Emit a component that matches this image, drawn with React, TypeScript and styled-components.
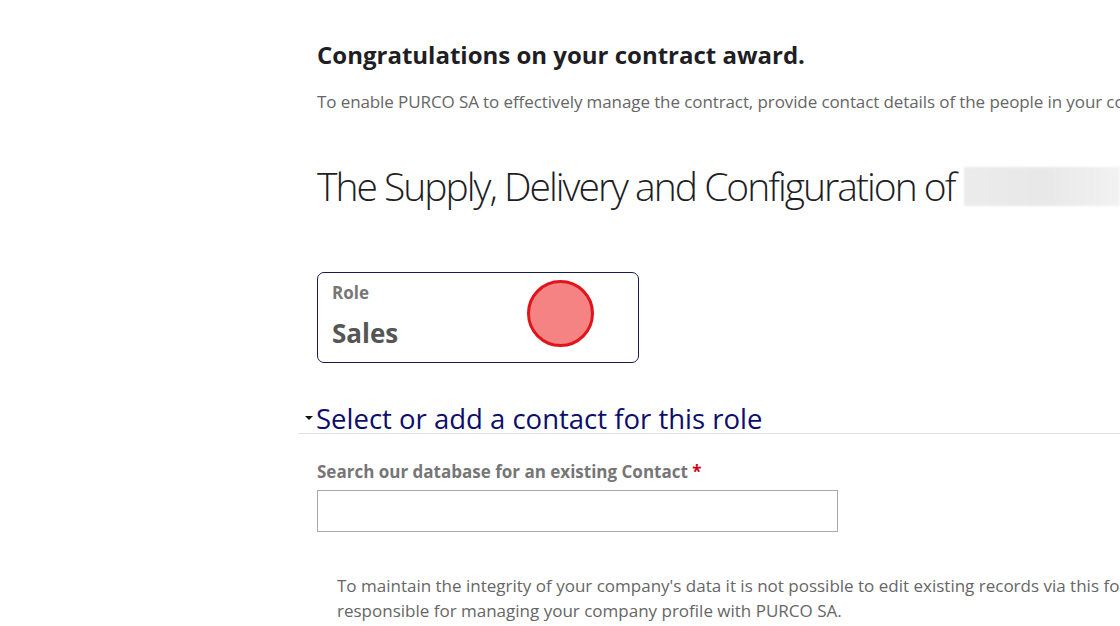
import React from 'react';
import styled, { createGlobalStyle } from 'styled-components';

const GlobalStyle = createGlobalStyle`
  html, body {
    margin: 0;
    padding: 0;
    background: #fff;
    overflow: hidden;
  }
  body {
    font-family: "Open Sans", "Liberation Sans", sans-serif;
    width: 1120px;
    height: 626px;
  }
`;

const Page = styled.div`
  padding: 38px 0 0 317px;
  width: 803px;
`;

const Title = styled.h2`
  margin: 0;
  font-size: 24px;
  font-weight: 700;
  color: #1e1e24;
  line-height: 34px;
`;

const Intro = styled.p`
  margin: 18px 0 0;
  font-size: 17px;
  letter-spacing: -0.1px;
  color: #666;
  line-height: 24px;
  white-space: nowrap;
  overflow: hidden;
`;

const ContractTitle = styled.h1`
  display: flex;
  align-items: center;
  gap: 10px;
  margin: 46px 0 0;
  font-size: 39px;
  font-weight: 300;
  letter-spacing: -2px;
  color: #1e1e24;
  line-height: 52px;
  white-space: nowrap;
`;

const Redacted = styled.span`
  display: inline-block;
  flex: 1;
  min-width: 150px;
  height: 39px;
  background: linear-gradient(90deg, #ececec 0%, #e8e8e8 50%, #f2f2f2 100%);
  filter: blur(1px);
`;

const RoleCard = styled.div`
  position: relative;
  margin-top: 60px;
  width: 322px;
  height: 91px;
  box-sizing: border-box;
  border: 1.5px solid #1c1c4a;
  border-radius: 7px;
  padding: 9px 14px;
`;

const RoleLabel = styled.div`
  font-size: 17px;
  font-weight: 700;
  color: #777;
  line-height: 22px;
`;

const RoleValue = styled.div`
  margin-top: 12px;
  font-size: 26px;
  font-weight: 700;
  color: #555;
  line-height: 34px;
`;

const ClickMarker = styled.span`
  position: absolute;
  left: 209px;
  top: 7px;
  width: 61px;
  height: 61px;
  border-radius: 50%;
  background: #f58383;
  border: 3px solid #e0141a;
`;

const Section = styled.div`
  margin: 38px 0 0 -19px;
  width: 822px;
`;

const SectionHeader = styled.div`
  display: flex;
  align-items: center;
  border-bottom: 1px solid #e3e3e3;
  padding-left: 7px;
  height: 32px;
`;

const Caret = styled.span`
  width: 0;
  height: 0;
  border-left: 4px solid transparent;
  border-right: 4px solid transparent;
  border-top: 4px solid #111;
  margin-right: 3px;
  margin-top: 2px;
`;

const SectionTitle = styled.span`
  font-size: 27.5px;
  color: #0d0d6b;
  line-height: 34px;
  margin-top: 4px;
`;

const Field = styled.div`
  padding-left: 19px;
  margin-top: 26px;
`;

const FieldLabel = styled.label`
  display: block;
  font-size: 17px;
  font-weight: 700;
  color: #767676;
  line-height: 24px;
`;

const Required = styled.span`
  color: #d0021b;
`;

const TextInput = styled.input`
  display: block;
  margin-top: 6px;
  width: 521px;
  height: 42px;
  box-sizing: border-box;
  border: 1px solid #a9a9a9;
  border-radius: 0;
  font-family: inherit;
  font-size: 16px;
  padding: 0 10px;
  outline: none;
`;

const Notice = styled.p`
  margin: 41px 0 0 20px;
  font-size: 17px;
  color: #666;
  line-height: 25px;
  width: 783px;
  overflow: hidden;
`;

const NoticeLine = styled.span`
  display: block;
  white-space: nowrap;
`;

export default function App() {
  return (
    <>
      <GlobalStyle />
      <Page>
        <Title>Congratulations on your contract award.</Title>
        <Intro>
          To enable PURCO SA to effectively manage the contract, provide contact details of the people in your company responsible for each role.
        </Intro>
        <ContractTitle>
          The Supply, Delivery and Configuration of <Redacted />
        </ContractTitle>
        <RoleCard>
          <RoleLabel>Role</RoleLabel>
          <RoleValue>Sales</RoleValue>
          <ClickMarker />
        </RoleCard>
        <Section>
          <SectionHeader>
            <Caret />
            <SectionTitle>Select or add a contact for this role</SectionTitle>
          </SectionHeader>
          <Field>
            <FieldLabel>
              Search our database for an existing Contact <Required>*</Required>
            </FieldLabel>
            <TextInput type="text" />
          </Field>
        </Section>
        <Notice>
          <NoticeLine>
            To maintain the integrity of your company's data it is not possible to edit existing records via this form. Please contact the person
          </NoticeLine>
          <NoticeLine>responsible for managing your company profile with PURCO SA.</NoticeLine>
        </Notice>
      </Page>
    </>
  );
}
